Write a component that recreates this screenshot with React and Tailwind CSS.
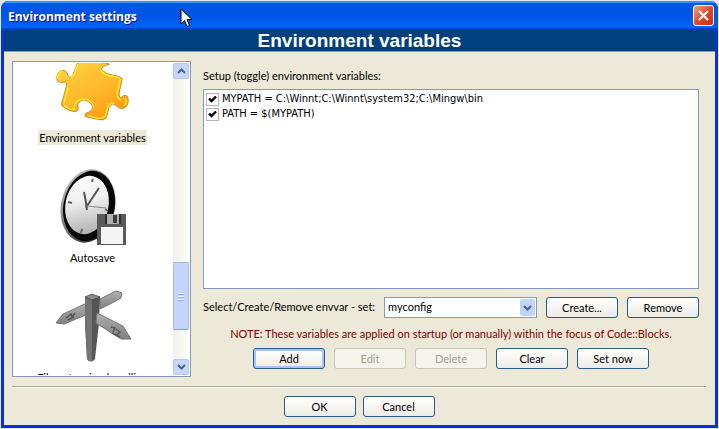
import { useState } from "react";
import clsx from "clsx";

function PuzzleIcon() {
  return (
    <svg width="74" height="59" viewBox="0 0 75 59" aria-hidden="true">
      <defs>
        <linearGradient id="puzzle" x1="0.2" y1="0" x2="0.8" y2="1">
          <stop offset="0" stopColor="#ffd03e" />
          <stop offset="0.5" stopColor="#ffb82c" />
          <stop offset="1" stopColor="#ff9a10" />
        </linearGradient>
      </defs>
      <path
        d="M22 -1 L45 -1 Q55 0 54 1 Q46 3 46 6 Q50 11 58 12 Q66 13 67 16 L64 30 Q63 34 66 35 Q68 31 72 33 Q75 39 71 44 Q66 48 61 43 Q57 39 54 44 L51 55 Q49 58 44 57 L30 54 Q28 52 31 50 Q37 49 37 44 Q35 38 28 37 Q22 38 22 43 Q24 48 19 49 Q11 48 6 43 Q5 40 7 36 L10 25 Q12 18 8 19 Q4 21 1 17 Q0 8 7 7 Q11 7 12 12 Q14 16 17 12 Z"
        fill="url(#puzzle)"
        stroke="#c58a35"
        strokeWidth="1"
      />
      <path
        d="M22 1 Q18 13 15 15 M45 7 Q50 13 58 13 Q65 14 65 17 L62 31 Q62 36 66 37 M70 35 Q73 39 69 43 M59 41 Q56 39 53 43 L50 53 Q48 56 43 56 L33 53 M8 43 Q12 46 18 47 Q18 37 28 36 Q36 37 38 44 M2 16 Q0 9 7 8 M8 41 L12 24"
        fill="none"
        stroke="#ffee20"
        strokeWidth="1.4"
      />
    </svg>
  );
}

function AutosaveIcon() {
  return (
    <svg width="68" height="77" viewBox="0 0 68 77" aria-hidden="true">
      <defs>
        <linearGradient id="face" x1="0.2" y1="0" x2="0.5" y2="1">
          <stop offset="0" stopColor="#ffffff" />
          <stop offset="0.45" stopColor="#f0f0f0" />
          <stop offset="1" stopColor="#b4b4b4" />
        </linearGradient>
        <linearGradient id="rim" x1="0" y1="0" x2="1" y2="1">
          <stop offset="0" stopColor="#d0d0d0" />
          <stop offset="0.5" stopColor="#777" />
          <stop offset="1" stopColor="#111" />
        </linearGradient>
      </defs>
      <ellipse cx="29" cy="38" rx="27" ry="37" fill="url(#rim)" transform="rotate(12 29 38)" />
      <ellipse cx="30" cy="38" rx="25.500" ry="35.500" fill="#080808" transform="rotate(12 30 38)" />
      <ellipse cx="28" cy="37" rx="21.500" ry="29.500" fill="url(#face)" transform="rotate(12 28 37)" />
      <path d="M34 11l-1 3M9 34l4 1M46 41l3 2M23 61l-1 4" stroke="#666" strokeWidth="2" />
      <path d="M28 40L25 24M28 38L40 20M28 42L27 37" stroke="#555" strokeWidth="2" fill="none" />
      <path d="M28 38L47 40" stroke="#888" strokeWidth="1" />
      <path d="M38 46h29v31H38z" fill="#5a5a5a" />
      <path d="M46 46h15v10H46z" fill="#b0b0b0" />
      <path d="M54 47h4v8h-4z" fill="#3c3c3c" />
      <path d="M46 46h2v10h-2zM60 46h2v10h-2z" fill="#2c2c2c" />
      <path d="M42 59h22v17H42z" fill="#f4f4f4" />
    </svg>
  );
}

function SignpostIcon() {
  return (
    <svg width="78" height="76" viewBox="0 0 78 76" aria-hidden="true">
      <defs>
        <linearGradient id="board" x1="0" y1="0" x2="0" y2="1">
          <stop offset="0" stopColor="#b0b0b0" />
          <stop offset="1" stopColor="#808080" />
        </linearGradient>
      </defs>
      <path d="M46 10L62 2L68 4L67 9L60 13L46 20Z" fill="url(#board)" stroke="#777" />
      <path d="M33 14L9 25L2 34L10 35L34 25Z" fill="url(#board)" stroke="#777" />
      <path d="M12 29l5-4 1 3 3-4M14 31l6-3" stroke="#555" strokeWidth="1.5" fill="none" />
      <path d="M31 8L38 5L46 8L45 34L41 70Q37 75 33 70L31 34Z" fill="#555" />
      <path d="M31 8L38 11L38 72Q34 73 33 70L31 34Z" fill="#737373" />
      <path d="M31 8L38 5L46 8L38 11Z" fill="#8d8d8d" stroke="#444" strokeWidth="0.7" />
      <path d="M43 24L69 37L77 50L67 50L42 34Z" fill="url(#board)" stroke="#777" />
      <path d="M57 38l4 1-2 4M62 40l4 3-3 3M58 44l8 4" stroke="#555" strokeWidth="1.5" fill="none" />
    </svg>
  );
}

function Chevron({ up }) {
  return (
    <svg width="9" height="6" viewBox="0 0 9 6" aria-hidden="true">
      <path d={up ? "M1 5L4.500 1.500L8 5" : "M1 1L4.500 4.500L8 1"} fill="none" stroke="#4d6185" strokeWidth="2" />
    </svg>
  );
}

function ScrollButton({ up, label }) {
  return (
    <button
      aria-label={label}
      className="flex h-4 w-full shrink-0 items-center justify-center rounded-xs border border-[#b4c8f6] bg-[#c6d6fd]"
    >
      <Chevron up={up} />
    </button>
  );
}

function XpButton({ children, primary, disabled }) {
  return (
    <button
      disabled={disabled}
      className={clsx(
        "h-[21px] w-[72px] rounded-[3px] border text-center leading-none",
        disabled
          ? "border-[#c9c7ba] bg-[#f5f4ea] text-[#a1a192]"
          : "border-[#2a5b8c] bg-linear-to-b from-white to-[#ecebe6]",
        primary && "inset-ring-2 inset-ring-[#a9c4f2]",
      )}
    >
      {children}
    </button>
  );
}

function Category({ icon, label }) {
  return (
    <li className="flex h-30 shrink-0 flex-col items-center justify-end">
      {icon}
      <button className="mt-[5px] h-[15px] px-1 leading-[13px] whitespace-nowrap">{label}</button>
    </li>
  );
}

function Variable({ text }) {
  const [on, setOn] = useState(true);
  return (
    <label className="flex h-[15px] items-center gap-[3px] font-['DejaVu_Sans_Condensed','DejaVu_Sans',sans-serif]">
      <span className="grid place-items-center">
        <input
          type="checkbox"
          checked={on}
          onChange={() => setOn(!on)}
          className="col-start-1 row-start-1 size-[13px] appearance-none border border-[#b5b5b0] bg-white"
        />
        {on && (
          <svg width="9" height="9" viewBox="0 0 9 9" className="pointer-events-none col-start-1 row-start-1" aria-hidden="true">
            <path d="M1 3.500L3.500 6L8 1.500" fill="none" stroke="#000" strokeWidth="2.400" />
          </svg>
        )}
      </span>
      {text}
    </label>
  );
}

export default function App() {
  return (
    <div className="h-screen min-h-96 bg-[#e4e4ec] p-px font-[Lato,Tahoma,sans-serif] text-[11px] text-black">
      <div className="relative flex h-full flex-col overflow-hidden rounded-t-lg bg-[#0831d9]">
        <header className="flex h-[29px] shrink-0 items-center justify-between bg-linear-to-b from-[#0058e6] via-[#0054e3] via-50% to-[#0066ff] px-[7px] pr-1 shadow-[inset_0_2px_1px_#3d95ff,inset_0_-2px_1px_#003dd7]">
          <h1 className="pt-0.5 font-['Open_Sans',sans-serif] text-[12px] font-bold text-white [text-shadow:1px_1px_#0f1089]">
            Environment settings
          </h1>
          <button aria-label="Close" className="grid size-[21px] place-items-center rounded-[3px] border border-white bg-linear-to-br from-[#f0a088] via-[#e0492a] to-[#c33010]">
            <svg width="13" height="13" viewBox="0 0 13 13" aria-hidden="true">
              <path d="M2 2L11 11M11 2L2 11" stroke="#fff" strokeWidth="2.200" />
            </svg>
          </button>
        </header>

        <main className="mx-[3px] mb-[3px] flex min-h-0 flex-1 flex-col bg-[#ece9d8]">
          <h2 className="h-[22px] shrink-0 border-b border-[#8ca0a8] bg-[#004080] text-center font-['Liberation_Sans',Arial,sans-serif] text-[19px] leading-[22px] font-bold text-white">
            Environment variables
          </h2>

          <div className="flex min-h-0 flex-1 gap-3 px-2 pt-[9px] pb-[9px]">
            <nav className="flex w-[179px] shrink-0 border border-[#7f9db9] bg-white p-px">
              <ul className="flex min-w-0 flex-1 flex-col overflow-hidden pr-0.5">
                <li className="flex h-[82px] shrink-0 flex-col items-center justify-between">
                  <PuzzleIcon />
                  <button className="h-[15px] bg-[#ece9d8] px-px leading-[13px] whitespace-nowrap">Environment variables</button>
                </li>
                <Category icon={<AutosaveIcon />} label="Autosave" />
                <Category icon={<SignpostIcon />} label="File extension handling" />
              </ul>
              <div className="flex w-4 shrink-0 flex-col bg-linear-to-r from-[#f0efe8] to-[#fefefb]">
                <ScrollButton up label="Scroll up" />
                <div className="flex-[185]" />
                <div className="flex flex-[67] items-center justify-center rounded-xs border border-[#a4b8e8] border-b-[#7f9bd8] bg-[#c4d4fd]">
                  <div className="flex flex-col gap-0.5">
                    <div className="h-px w-1.5 bg-[#eef4fe] shadow-[0_1px_#8cb0f8]" />
                    <div className="h-px w-1.5 bg-[#eef4fe] shadow-[0_1px_#8cb0f8]" />
                    <div className="h-px w-1.5 bg-[#eef4fe] shadow-[0_1px_#8cb0f8]" />
                  </div>
                </div>
                <div className="flex-[29]" />
                <ScrollButton label="Scroll down" />
              </div>
            </nav>

            <section className="flex min-w-0 flex-1 flex-col pr-2">
              <p className="pt-[7px] leading-4">Setup (toggle) environment variables:</p>
              <div className="mt-[5px] min-h-0 flex-1 border border-[#7f9db9] bg-white px-0.5 py-0.5">
                <Variable text="MYPATH = C:\Winnt;C:\Winnt\system32;C:\Mingw\bin" />
                <Variable text="PATH = $(MYPATH)" />
              </div>
              <div className="mt-2 flex items-center gap-[9px]">
                <label htmlFor="set" className="whitespace-nowrap">Select/Create/Remove envvar - set:</label>
                <div className="grid min-w-0 flex-1">
                  <select id="set" className="col-start-1 row-start-1 h-[21px] w-full appearance-none border border-[#7f9db9] bg-white px-[3px]">
                    <option>myconfig</option>
                  </select>
                  <span className="pointer-events-none col-start-1 row-start-1 mr-0.5 grid h-[17px] w-[15px] place-items-center self-center justify-self-end rounded-xs bg-[#c1d3fb]">
                    <Chevron />
                  </span>
                </div>
                <XpButton>Create...</XpButton>
                <XpButton>Remove</XpButton>
              </div>
              <p className="mt-2 text-center leading-4 whitespace-nowrap text-[#800000]">
                NOTE: These variables are applied on startup (or manually) within the focus of Code::Blocks.
              </p>
              <div className="mt-1.5 mb-2 flex justify-center gap-[9px]">
                <XpButton primary>Add</XpButton>
                <XpButton disabled>Edit</XpButton>
                <XpButton disabled>Delete</XpButton>
                <XpButton>Clear</XpButton>
                <XpButton>Set now</XpButton>
              </div>
            </section>
          </div>

          <footer className="mr-[9px] ml-2 flex shrink-0 justify-center gap-[7px] border-t border-[#aca899] pt-[9px] pb-2 shadow-[inset_0_1px_#fff]">
            <XpButton>OK</XpButton>
            <XpButton>Cancel</XpButton>
          </footer>
        </main>

        <svg className="absolute top-[7px] left-[179px]" width="13" height="20" viewBox="0 0 13 20" aria-hidden="true">
          <path d="M1 1V16L4.500 12.500L7 18.500L9.500 17.500L7 11.500H12Z" fill="#fff" stroke="#000" />
        </svg>
      </div>
    </div>
  );
}
